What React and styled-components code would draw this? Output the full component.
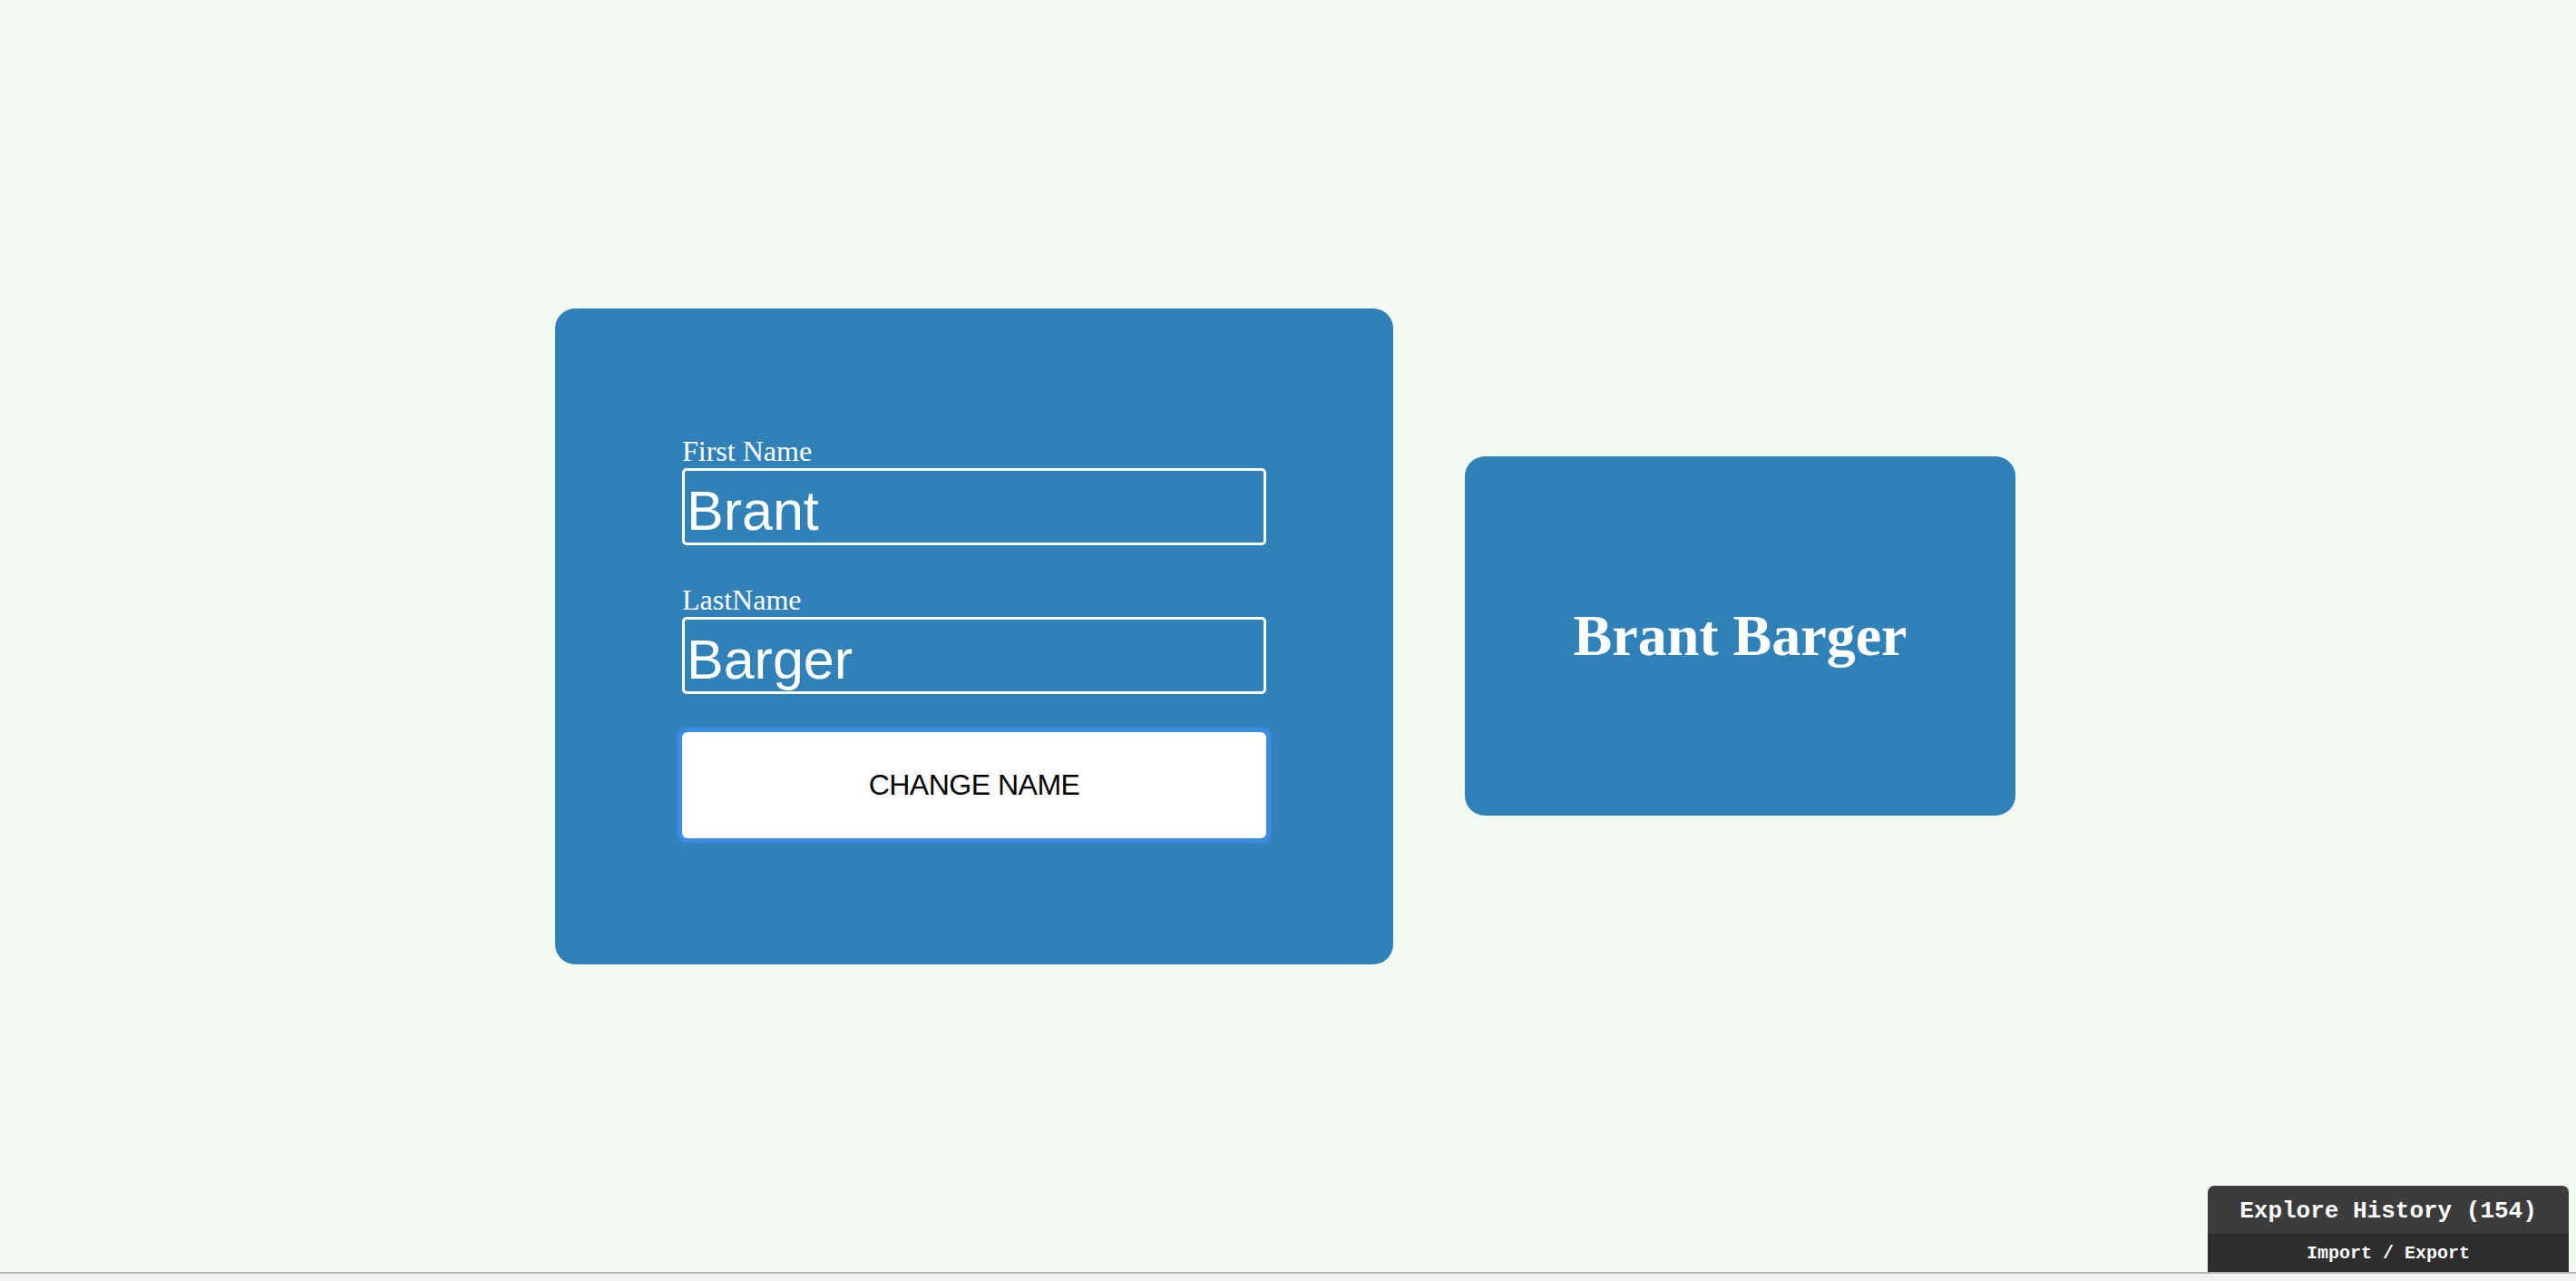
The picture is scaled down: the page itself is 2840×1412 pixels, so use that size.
import React, { useState } from 'react';
import styled, { createGlobalStyle } from 'styled-components';

const GlobalStyle = createGlobalStyle`
  html, body {
    margin: 0;
    padding: 0;
    background-color: #f3f8f1;
  }
  * {
    box-sizing: border-box;
  }
`;

// Layout
const Page = styled.div`
  display: flex;
  flex-direction: column;
  min-height: 100vh;
`;

const Stage = styled.main`
  height: calc(100vh - 10px);
  display: flex;
  align-items: center;
  justify-content: center;
  gap: 79px;
  padding-right: 6px;
`;

const Card = styled.div`
  background-color: #3181b9;
  border-radius: 22px;
  color: white;
`;

const FormCard = styled(Card)`
  width: 924px;
  padding: 139px 140px;
`;

const Form = styled.form`
  display: flex;
  flex-direction: column;
`;

const Label = styled.label`
  display: block;
  font-family: "Liberation Serif", "Times New Roman", serif;
  font-size: 32px;
  line-height: 37px;
  color: white;
  margin-top: ${(p) => (p.$first ? '0' : '42px')};
`;

const Input = styled.input`
  display: block;
  width: 100%;
  height: 85px;
  padding: 10px 2px 0;
  border: 3px solid white;
  border-radius: 5px;
  background: transparent;
  color: white;
  font-family: "Liberation Sans", Arial, sans-serif;
  font-size: 61px;
  outline: none;
`;

const Button = styled.button`
  margin-top: 42px;
  height: 117px;
  width: 100%;
  border: none;
  border-radius: 6px;
  background-color: white;
  color: black;
  font-family: "Liberation Sans", Arial, sans-serif;
  font-size: 32px;
  letter-spacing: -0.5px;
  padding-top: 2px;
  cursor: pointer;
  box-shadow: 0 0 0 5px #3a8de2, 0 0 3px 7px rgba(58, 141, 226, 0.4);
`;

const NameCard = styled(Card)`
  width: 607px;
  height: 396px;
  display: flex;
  align-items: center;
  justify-content: center;
`;

const FullName = styled.h1`
  margin: 0;
  font-family: "Liberation Serif", "Times New Roman", serif;
  font-size: 64px;
  font-weight: bold;
  color: white;
`;

const BottomStrip = styled.div`
  height: 10px;
  border-top: 2px solid #b6b4b8;
  background-color: #f1f1f1;
`;

// Explore history widget overlay
const HistoryWidget = styled.div`
  position: fixed;
  right: 8px;
  bottom: 10px;
  width: 398px;
  border-radius: 7px 7px 0 0;
  overflow: hidden;
  font-family: "Liberation Mono", "Courier New", monospace;
  font-weight: bold;
  color: white;
  text-align: center;
`;

const HistoryTitle = styled.div`
  height: 53px;
  line-height: 56px;
  background-color: #3c3c3c;
  font-size: 26px;
`;

const HistoryActions = styled.div`
  height: 42px;
  line-height: 44px;
  background-color: #2e2e2e;
  font-size: 20px;
`;

const App = () => {
  const [first, setFirst] = useState('Brant');
  const [last, setLast] = useState('Barger');
  const [name, setName] = useState('Brant Barger');

  const handleSubmit = (e) => {
    e.preventDefault();
    setName(`${first} ${last}`);
  };

  return (
    <Page>
      <GlobalStyle />
      <Stage>
        <FormCard>
          <Form onSubmit={handleSubmit}>
            <Label $first htmlFor="first">First Name</Label>
            <Input id="first" value={first} onChange={(e) => setFirst(e.target.value)} />
            <Label htmlFor="last">LastName</Label>
            <Input id="last" value={last} onChange={(e) => setLast(e.target.value)} />
            <Button type="submit">CHANGE NAME</Button>
          </Form>
        </FormCard>
        <NameCard>
          <FullName>{name}</FullName>
        </NameCard>
      </Stage>
      <BottomStrip />
      <HistoryWidget>
        <HistoryTitle>Explore History (154)</HistoryTitle>
        <HistoryActions>Import / Export</HistoryActions>
      </HistoryWidget>
    </Page>
  );
};

export default App;
